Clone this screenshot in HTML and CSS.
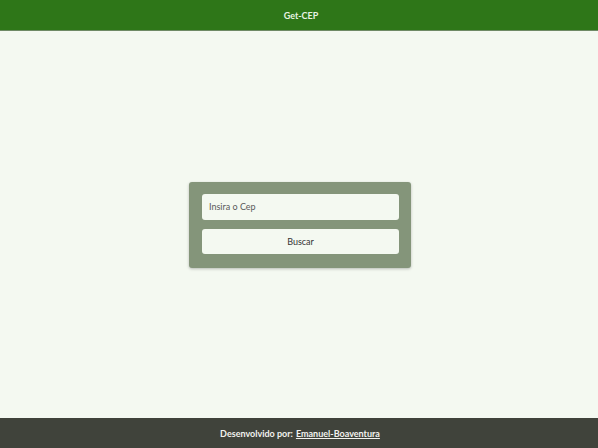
FILE: index.html
```html
<!DOCTYPE html>
<html lang="pt-BR">
<head>
<meta charset="utf-8">
<title>Get-CEP</title>
<link rel="stylesheet" href="styles.css">
</head>
<body>
<header class="topbar">Get-CEP</header>
<main class="content">
  <form class="card">
    <input class="field" type="text" placeholder="Insira o Cep">
    <button class="btn" type="button">Buscar</button>
  </form>
</main>
<footer class="bottombar">Desenvolvido por: <a class="link" href="#">Emanuel-Boaventura</a></footer>
</body>
</html>
```

FILE: styles.css
```css
* { box-sizing: border-box; }
html, body { height: 100%; }
body {
  margin: 0;
  display: flex;
  flex-direction: column;
  background: #f4f9f1;
  font-family: Lato, "Noto Sans", sans-serif;
}
.topbar {
  height: 31px;
  background: #2e7618;
  border-bottom: 1px solid #6f8a66;
  color: #e8f3e2;
  font-size: 9px;
  font-weight: 700;
  display: flex;
  align-items: center;
  justify-content: center;
  padding-left: 4px;
}
.content {
  flex: 1;
  display: flex;
  align-items: center;
  justify-content: center;
  padding-left: 2px;
}
.card {
  width: 222px;
  background: #84957a;
  border-radius: 3px;
  padding: 12px 12px 14px 13px;
  display: flex;
  flex-direction: column;
  gap: 9px;
  box-shadow: 0 1px 3px rgba(0,0,0,0.25);
}
.field, .btn {
  width: 197px;
  height: 26px;
  border: none;
  border-radius: 3px;
  background: #f4f9f1;
  font-family: inherit;
  font-size: 9px;
  color: #333;
  outline: none;
}
.field { padding: 0 7px; }
.field::placeholder { color: #5a5a5a; }
.btn { height: 25px; cursor: pointer; color: #333; }
.bottombar {
  height: 30px;
  background: #40433b;
  color: #f2f2ee;
  font-size: 9px;
  font-weight: 700;
  display: flex;
  align-items: center;
  justify-content: center;
  gap: 3px;
  padding-left: 2px;
}
.link { color: #f2f2ee; text-decoration: underline; }
```
